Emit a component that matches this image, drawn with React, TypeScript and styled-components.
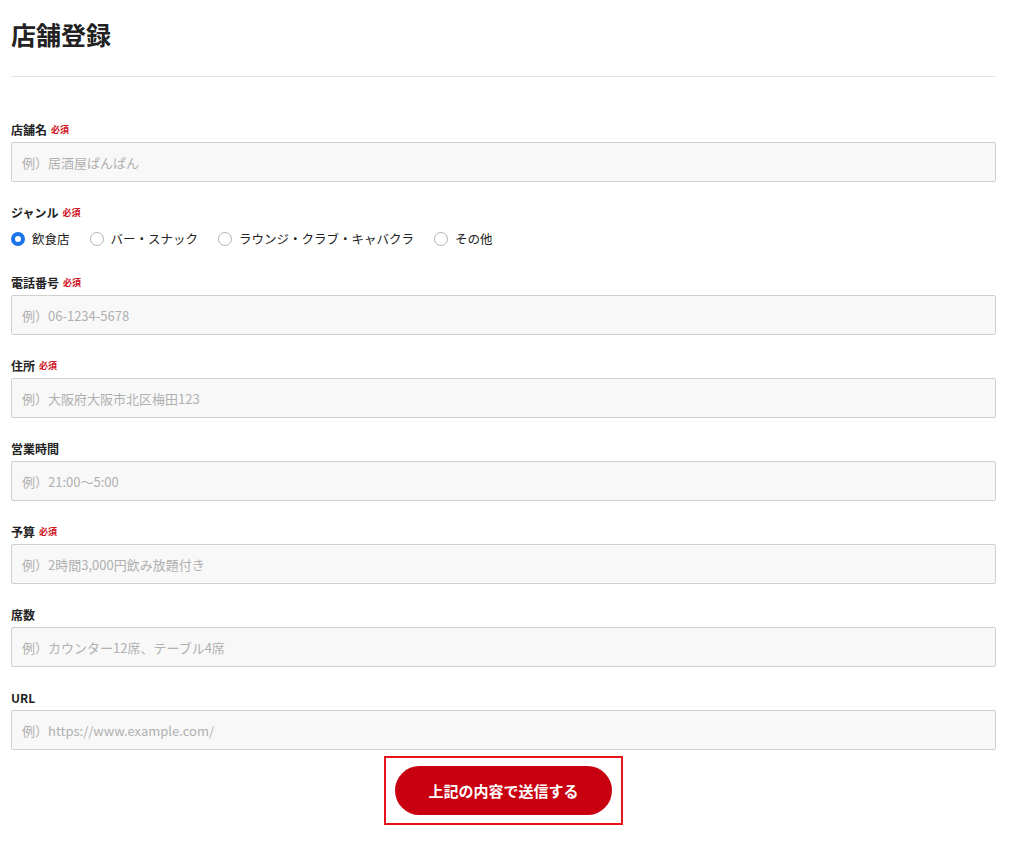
import styled, { createGlobalStyle } from "styled-components"

const GlobalStyle = createGlobalStyle`
    body {
        margin: 0;
        background: #fff;
        color: #222;
        font-family: "Noto Sans CJK JP", "Noto Sans", sans-serif;
    }
`

const Page = styled.div`
    width: 985px;
    margin-left: 11px;
    padding-top: 14px;
`

const Title = styled.h1`
    margin: 0;
    font-size: 25px;
    line-height: 40px;
    font-weight: 700;
    color: #222;
`

const Divider = styled.hr`
    margin: 22px 0 43px;
    border: 0;
    border-top: 1px solid #e4e4e4;
`

const Field = styled.div`
    margin-bottom: 21px;
`

const Label = styled.label`
    display: flex;
    align-items: center;
    gap: 4px;
    height: 18px;
    margin-bottom: 4px;
    font-size: 12px;
    font-weight: 700;
    color: #222;
`

const Required = styled.span`
    font-size: 9px;
    font-weight: 700;
    color: #d0101b;
`

const Input = styled.input`
    box-sizing: border-box;
    display: block;
    width: 100%;
    height: 40px;
    padding: 0 10px;
    border: 1px solid #cfcfcf;
    border-radius: 2px;
    background: #f8f8f8;
    font-family: inherit;
    font-size: 13px;
    color: #222;
    outline: none;

    &::placeholder {
        color: #b0b0b0;
    }
`

const RadioRow = styled.div`
    display: flex;
    align-items: center;
    height: 27px;
`

const RadioOption = styled.label`
    display: flex;
    align-items: center;
    gap: 7px;
    margin-right: 20px;
    font-size: 12.5px;
    color: #222;
`

const RadioDot = styled.span<{ $checked?: boolean }>`
    box-sizing: border-box;
    width: 14px;
    height: 14px;
    border-radius: 50%;
    border: ${({ $checked }) => ($checked ? "4px solid #1a73e8" : "1px solid #b5b5b5")};
    background: #fff;
`

const SubmitArea = styled.div`
    display: flex;
    justify-content: center;
    margin-top: -15px;
`

const SubmitFrame = styled.div`
    padding: 8px 9px;
    border: 2px solid #e8141c;
`

const SubmitButton = styled.button`
    width: 217px;
    height: 49px;
    border: 0;
    border-radius: 25px;
    background: #c8000f;
    color: #fff;
    font-family: inherit;
    font-size: 15px;
    font-weight: 700;
    cursor: pointer;
`

type TextField = { label: string; placeholder: string; required?: boolean }

const fieldsAfterGenre: TextField[] = [
    { label: "電話番号", placeholder: "例）06-1234-5678", required: true },
    { label: "住所", placeholder: "例）大阪府大阪市北区梅田123", required: true },
    { label: "営業時間", placeholder: "例）21:00〜5:00" },
    { label: "予算", placeholder: "例）2時間3,000円飲み放題付き", required: true },
    { label: "席数", placeholder: "例）カウンター12席、テーブル4席" },
    { label: "URL", placeholder: "例）https://www.example.com/" },
]

const genres = ["飲食店", "バー・スナック", "ラウンジ・クラブ・キャバクラ", "その他"]

const InputField = ({ label, placeholder, required }: TextField) => (
    <Field>
        <Label>
            {label}
            {required && <Required>必須</Required>}
        </Label>
        <Input placeholder={placeholder} />
    </Field>
)

export default function App() {
    return (
        <>
            <GlobalStyle />
            <Page>
                <Title>店舗登録</Title>
                <Divider />
                <InputField label="店舗名" placeholder="例）居酒屋ぱんぱん" required />
                <Field>
                    <Label>
                        ジャンル<Required>必須</Required>
                    </Label>
                    <RadioRow>
                        {genres.map((g, i) => (
                            <RadioOption key={g}>
                                <RadioDot $checked={i === 0} />
                                {g}
                            </RadioOption>
                        ))}
                    </RadioRow>
                </Field>
                {fieldsAfterGenre.map((f) => (
                    <InputField key={f.label} {...f} />
                ))}
                <SubmitArea>
                    <SubmitFrame>
                        <SubmitButton>上記の内容で送信する</SubmitButton>
                    </SubmitFrame>
                </SubmitArea>
            </Page>
        </>
    )
}
